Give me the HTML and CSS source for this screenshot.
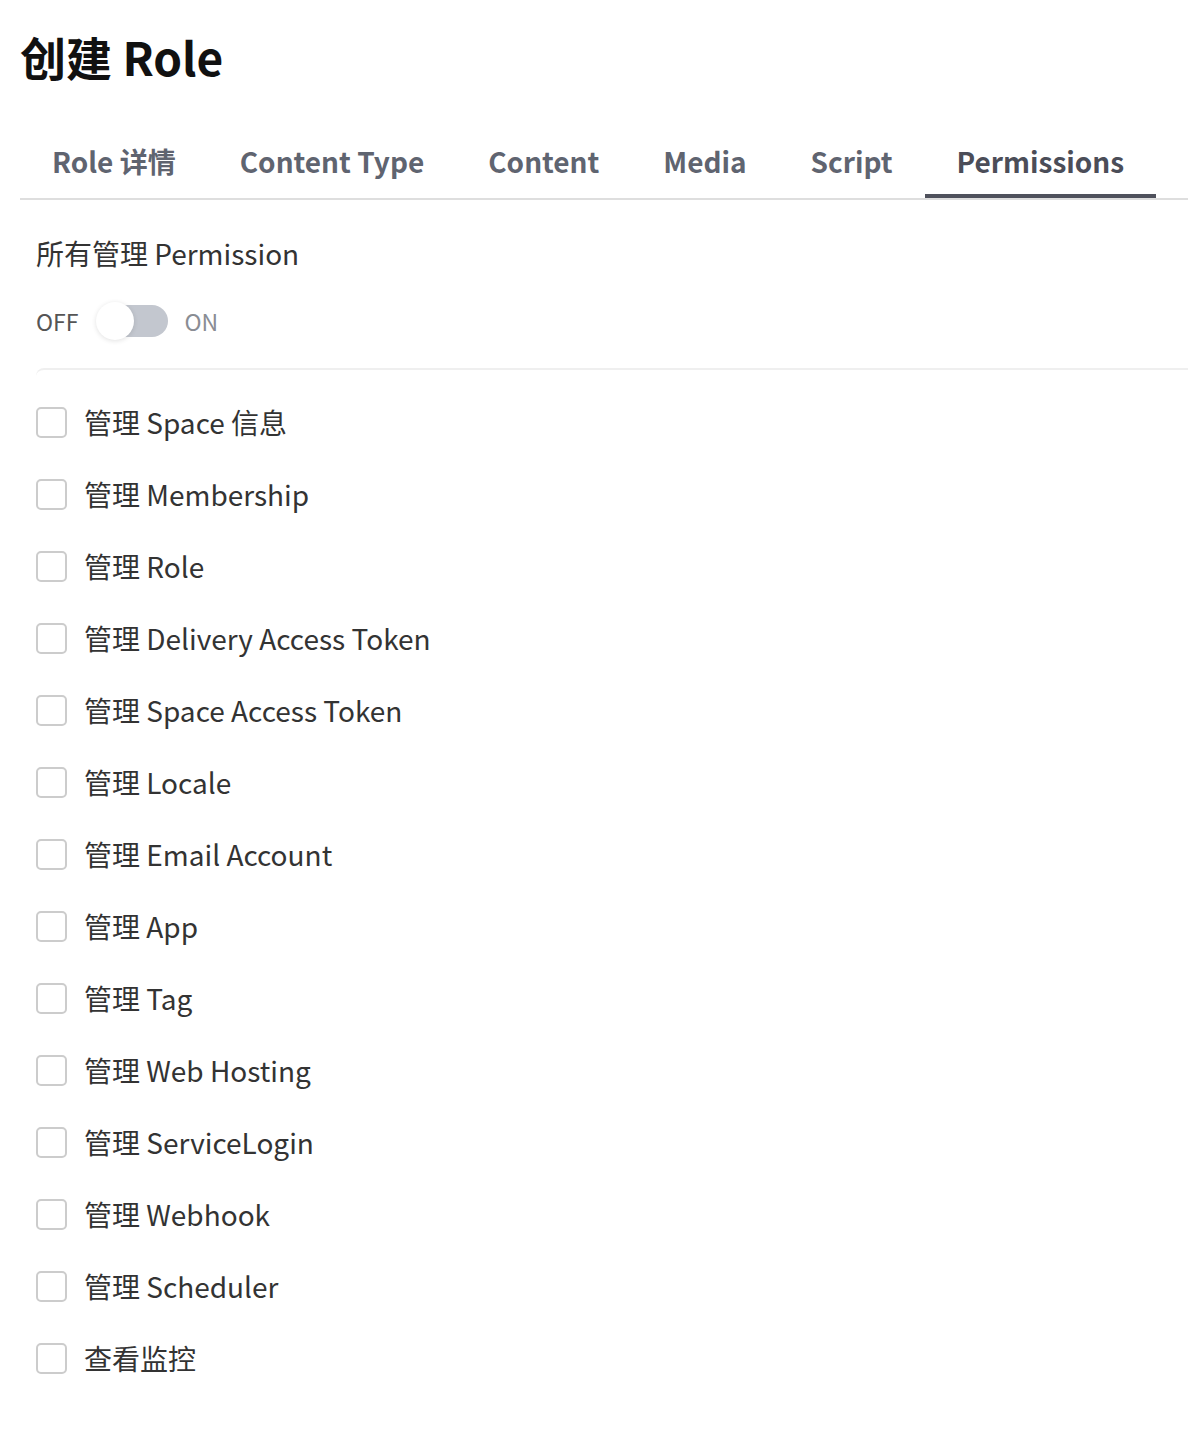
FILE: index.html
```html
<!DOCTYPE html>
<html lang="zh">
<head>
<meta charset="utf-8">
<title>创建 Role</title>
<link rel="stylesheet" href="styles.css">
</head>
<body>
<div class="page">
  <h1 class="title">创建 Role</h1>
  <nav class="tabs">
    <div class="tab">Role 详情</div>
    <div class="tab">Content Type</div>
    <div class="tab">Content</div>
    <div class="tab">Media</div>
    <div class="tab">Script</div>
    <div class="tab active">Permissions</div>
  </nav>
  <section class="pane">
    <div class="all-label">所有管理 Permission</div>
    <div class="toggle-row">
      <span class="off">OFF</span>
      <span class="toggle"><span class="track"></span><span class="knob"></span></span>
      <span class="on">ON</span>
    </div>
    <div class="list">
      <label class="row"><span class="box"></span><span class="text">管理 Space 信息</span></label>
      <label class="row"><span class="box"></span><span class="text">管理 Membership</span></label>
      <label class="row"><span class="box"></span><span class="text">管理 Role</span></label>
      <label class="row"><span class="box"></span><span class="text">管理 Delivery Access Token</span></label>
      <label class="row"><span class="box"></span><span class="text">管理 Space Access Token</span></label>
      <label class="row"><span class="box"></span><span class="text">管理 Locale</span></label>
      <label class="row"><span class="box"></span><span class="text">管理 Email Account</span></label>
      <label class="row"><span class="box"></span><span class="text">管理 App</span></label>
      <label class="row"><span class="box"></span><span class="text">管理 Tag</span></label>
      <label class="row"><span class="box"></span><span class="text">管理 Web Hosting</span></label>
      <label class="row"><span class="box"></span><span class="text">管理 ServiceLogin</span></label>
      <label class="row"><span class="box"></span><span class="text">管理 Webhook</span></label>
      <label class="row"><span class="box"></span><span class="text">管理 Scheduler</span></label>
      <label class="row"><span class="box"></span><span class="text">查看监控</span></label>
    </div>
  </section>
</div>
</body>
</html>
```

FILE: styles.css
```css
html, body {
  margin: 0;
  padding: 0;
  background: #ffffff;
}
body {
  font-family: "Noto Sans CJK SC", "Noto Sans", sans-serif;
  color: #333333;
}
.page {
  padding: 26px 0 0 20px;
}
.title {
  margin: 0;
  font-size: 46px;
  line-height: 60px;
  font-weight: 700;
  color: #111111;
}
.tabs {
  margin-top: 40px;
  display: flex;
  border-bottom: 2px solid #dedede;
}
.tab {
  padding: 15px 32px 13px;
  font-size: 28px;
  line-height: 40px;
  font-weight: 700;
  color: #5f6470;
  border-bottom: 4px solid transparent;
}
.tab.active {
  color: #4b4d58;
  border-bottom-color: #4f515c;
}
.pane {
  padding: 33px 0 40px 16px;
}
.all-label {
  font-size: 28px;
  line-height: 40px;
  color: #333333;
}
.toggle-row {
  margin-top: 28px;
  display: flex;
  align-items: center;
  height: 40px;
}
.off {
  font-size: 23px;
  color: #555555;
}
.on {
  font-size: 23px;
  color: #8a8d94;
}
.toggle {
  position: relative;
  width: 72px;
  height: 40px;
  margin: 0 16px 0 18px;
}
.track {
  position: absolute;
  left: 4px;
  right: 0;
  top: 4px;
  bottom: 4px;
  border-radius: 16px;
  background: #c3c7cf;
}
.knob {
  position: absolute;
  left: 0;
  top: 1px;
  width: 38px;
  height: 38px;
  border-radius: 50%;
  background: #ffffff;
  box-shadow: 0 1px 5px rgba(0, 0, 0, 0.12);
}
.list {
  margin-top: 27px;
  padding-top: 16px;
  border-top: 2px solid #efefef;
  border-top-left-radius: 8px;
}
.row {
  display: flex;
  align-items: center;
  height: 72px;
}
.box {
  box-sizing: border-box;
  width: 31px;
  height: 31px;
  border: 2px solid #cccccc;
  border-radius: 5px;
  background: #ffffff;
  flex: none;
}
.text {
  margin-left: 17px;
  font-size: 28px;
  line-height: 40px;
  color: #333333;
}
```
